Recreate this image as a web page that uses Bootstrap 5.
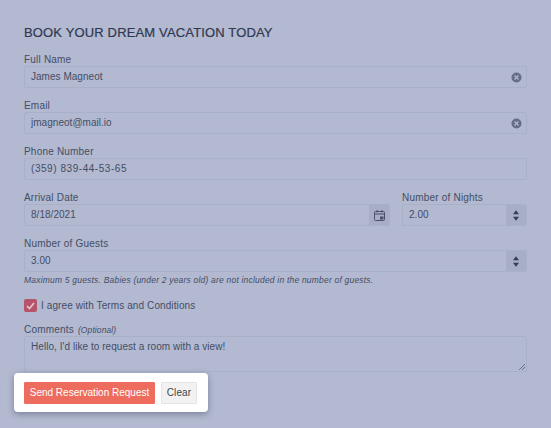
<!DOCTYPE html>
<html lang="en">
<head>
<meta charset="utf-8">
<title>Book your dream vacation</title>
<link href="https://cdn.jsdelivr.net/npm/bootstrap@5.3.0/dist/css/bootstrap.min.css" rel="stylesheet">
<style>
html,body{height:100%;overflow:hidden}
body{background:#b2b9d0;font-family:"Liberation Sans",Arial,sans-serif;color:#454d66;font-size:10px;letter-spacing:.1px}
.sheet{padding:25px 24px 0 24px}
.ttl{font-size:13px;font-weight:400;color:#2f3850;line-height:16px;margin:0 0 12px;letter-spacing:.15px;-webkit-text-stroke:.2px #2f3850}
.fld{margin-bottom:11px}
.lbl{display:block;font-size:10px;line-height:13px;margin:0;height:13px;letter-spacing:.2px}
.lbl em{font-size:8.5px;margin-left:1px;letter-spacing:.1px}
.box{height:22px;border:1px solid #a9b1c9;border-radius:2px;font-size:10px;line-height:20px;padding:0 6px;display:flex;align-items:center;justify-content:space-between}
.box input{all:unset;flex:1;min-width:0;font:inherit;color:inherit;letter-spacing:.03px}
.box input.wide{letter-spacing:.55px}
.stepper{align-self:stretch;width:20px;margin-right:-6px;background:#a7aec6;display:flex;align-items:center;justify-content:center;border-radius:0 2px 2px 0}
.clearx{width:11px;height:11px;display:block;margin-right:-2px}
.hint{font-size:8.5px;font-style:italic;line-height:11px;margin-top:3px;height:11px;letter-spacing:.2px}
.chk{display:flex;align-items:center;gap:4px;margin:13px 0 11px;line-height:13px}
.chkbox{width:13px;height:13px;border-radius:2px;background:#b5546b;display:flex;align-items:center;justify-content:center}
.area{height:36px;border:1px solid #a9b1c9;border-radius:2px;padding:3px 6px;font-size:10px;line-height:14px;position:relative;letter-spacing:.05px}
.grip{position:absolute;right:1px;bottom:1px;width:6px;height:6px}
.panel{position:absolute;left:14px;top:373px;width:194px;height:39px;background:#fff;border-radius:4px;box-shadow:0 2px 6px rgba(50,60,90,.45);display:flex;align-items:center;gap:6px;padding:0 10px}
.go,.go:hover{background:#ee6c5d;color:#fff;border:1px solid #ee6c5d;border-radius:1px;width:131px;height:22px;font-size:10px;line-height:20px;padding:0;letter-spacing:0}
.wipe,.wipe:hover{background:#f2f2f2;color:#3f4450;border:1px solid #e4e4e4;border-radius:1px;width:36px;height:22px;font-size:10px;line-height:20px;padding:0;letter-spacing:.1px}
.nights{width:125px;margin-left:12px}
</style>
</head>
<body>
<div class="sheet position-relative">
<h1 class="ttl">BOOK YOUR DREAM VACATION TODAY</h1>
<div class="fld"><label class="lbl">Full Name</label><div class="box"><input value="James Magneot" aria-label="Full Name"><svg class="clearx" viewBox="0 0 11 11"><circle cx="5.5" cy="5.5" r="5" fill="#666d84"/><path d="M3.5 3.5l4 4M7.5 3.5l-4 4" stroke="#b2b9d0" stroke-width="1.3"/></svg></div></div>
<div class="fld"><label class="lbl">Email</label><div class="box"><input value="jmagneot@mail.io" aria-label="Email"><svg class="clearx" viewBox="0 0 11 11"><circle cx="5.5" cy="5.5" r="5" fill="#666d84"/><path d="M3.5 3.5l4 4M7.5 3.5l-4 4" stroke="#b2b9d0" stroke-width="1.3"/></svg></div></div>
<div class="fld"><label class="lbl">Phone Number</label><div class="box"><input class="wide" value="(359) 839-44-53-65" aria-label="Phone Number"></div></div>
<div class="d-flex fld">
<div class="flex-grow-1"><label class="lbl">Arrival Date</label><div class="box"><input value="8/18/2021" aria-label="Arrival Date"><span class="stepper"><svg width="11" height="11" viewBox="0 0 11 11" fill="none"><rect x=".5" y="1.5" width="10" height="9" rx="1" stroke="#4a5168"/><path d="M.5 4h10M3 0v2.5M8 0v2.5" stroke="#4a5168"/><rect x="6" y="6.5" width="3.5" height="3" fill="#4a5168"/></svg></span></div></div>
<div class="nights"><label class="lbl">Number of Nights</label><div class="box"><input value="2.00" aria-label="Number of Nights"><span class="stepper"><svg width="6" height="11" viewBox="0 0 7 12"><path d="M3.5 0L7 4.5H0zM0 7.5h7L3.5 12z" fill="#363e56"/></svg></span></div></div>
</div>
<div><label class="lbl">Number of Guests</label><div class="box"><input value="3.00" aria-label="Number of Guests"><span class="stepper"><svg width="6" height="11" viewBox="0 0 7 12"><path d="M3.5 0L7 4.5H0zM0 7.5h7L3.5 12z" fill="#363e56"/></svg></span></div>
<div class="hint">Maximum 5 guests. Babies (under 2 years old) are not included in the number of guests.</div></div>
<div class="chk"><span class="chkbox"><svg width="9" height="8" viewBox="0 0 9 8" fill="none"><path d="M1 4l2.5 2.5L8 1" stroke="#e6c8d0" stroke-width="1.6"/></svg></span><span>I agree with Terms and Conditions</span></div>
<div><label class="lbl">Comments <em>(Optional)</em></label><div class="area">Hello, I'd like to request a room with a view!<svg class="grip" viewBox="0 0 6 6"><path d="M0 6L6 0M3 6l3-3" stroke="#4a5168" stroke-width=".7"/></svg></div></div>
</div>
<div class="panel"><button class="btn go">Send Reservation Request</button><button class="btn wipe">Clear</button></div>
</body>
</html>
